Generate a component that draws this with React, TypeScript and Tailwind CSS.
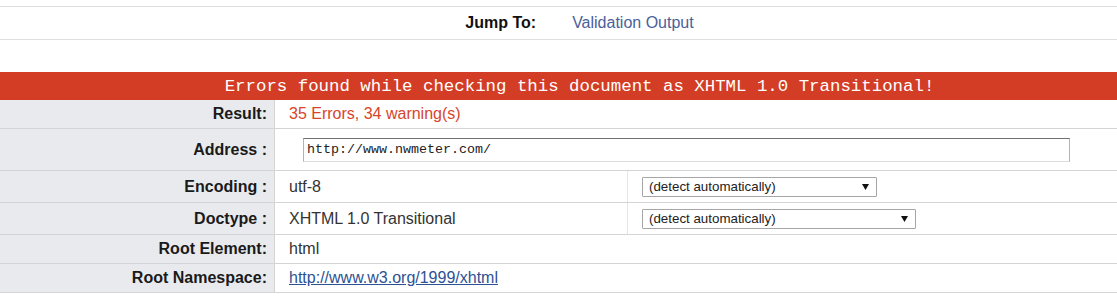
import React from "react";

const sans = { fontFamily: '"Liberation Sans", Arial, sans-serif' };

function Label({ children }: { children: React.ReactNode }) {
  return (
    <div className="w-[275px] shrink-0 bg-[#e9eaee] border-r border-[#d4d4d4] flex items-center justify-end pr-[7px] text-[16px] font-bold text-[#1a1a1a]">
      {children}
    </div>
  );
}

function FakeSelect({ width }: { width: string }) {
  return (
    <div
      className={`${width} h-[20px] border border-[#a6a6a6] bg-white flex items-center justify-between pl-[6px] pr-[7px] text-[13.33px] text-[#222] rounded-[1px]`}
    >
      <span className="leading-none">(detect automatically)</span>
      <svg width="7" height="7" viewBox="0 0 7 7">
        <path d="M0 1 L7 1 L3.5 7 Z" fill="#111" />
      </svg>
    </div>
  );
}

export default function App() {
  return (
    <div className="w-[1117px] h-[303px] bg-white overflow-hidden" style={sans}>
      <div className="h-[6px]" />
      <div className="h-[34px] border-t border-b border-[#dedede] flex items-center justify-center pl-[42px] gap-[36px] text-[16px]">
        <span className="font-bold text-[#111]">Jump To:</span>
        <span className="text-[#4a609b]">Validation Output</span>
      </div>
      <div className="h-[32px]" />
      <div
        className="h-[28px] bg-[#d33d25] text-white flex items-center justify-center pl-[42px] pt-[2px] text-[17.4px]"
        style={{ fontFamily: '"Liberation Mono", "Courier New", monospace' }}
      >
        Errors found while checking this document as XHTML 1.0 Transitional!
      </div>

      <div className="flex h-[29px] border-b border-[#d4d4d4]">
        <Label>Result:</Label>
        <div className="flex items-center pl-[14px] text-[16px] text-[#d6452c]">
          35 Errors, 34 warning(s)
        </div>
      </div>

      <div className="flex h-[42px] border-b border-[#d4d4d4]">
        <Label>Address :</Label>
        <div className="flex items-center pl-[28px]">
          <div
            className="w-[767px] h-[24px] border border-[#b3b3b3] border-t-[#6f6f6f] border-b-[#dcdcdc] flex items-center pl-[3px] text-[13.33px] text-[#222]"
            style={{ fontFamily: '"Liberation Mono", "Courier New", monospace' }}
          >
            http://www.nwmeter.com/
          </div>
        </div>
      </div>

      <div className="flex h-[32px] border-b border-[#d4d4d4]">
        <Label>Encoding :</Label>
        <div className="w-[353px] shrink-0 border-r border-[#e6e6e6] flex items-center pl-[14px] text-[16px] text-[#333]">
          utf-8
        </div>
        <div className="flex items-center pl-[14px]">
          <FakeSelect width="w-[235px]" />
        </div>
      </div>

      <div className="flex h-[32px] border-b border-[#d4d4d4]">
        <Label>Doctype :</Label>
        <div className="w-[353px] shrink-0 border-r border-[#e6e6e6] flex items-center pl-[14px] text-[16px] text-[#333]">
          XHTML 1.0 Transitional
        </div>
        <div className="flex items-center pl-[14px]">
          <FakeSelect width="w-[274px]" />
        </div>
      </div>

      <div className="flex h-[29px] border-b border-[#d4d4d4]">
        <Label>Root Element:</Label>
        <div className="flex items-center pl-[14px] text-[16px] text-[#333]">html</div>
      </div>

      <div className="flex h-[29px] border-b border-[#d4d4d4]">
        <Label>Root Namespace:</Label>
        <div className="flex items-center pl-[14px] text-[16px]">
          <a className="text-[#2d5294] underline" href="#">
            http://www.w3.org/1999/xhtml
          </a>
        </div>
      </div>
    </div>
  );
}
